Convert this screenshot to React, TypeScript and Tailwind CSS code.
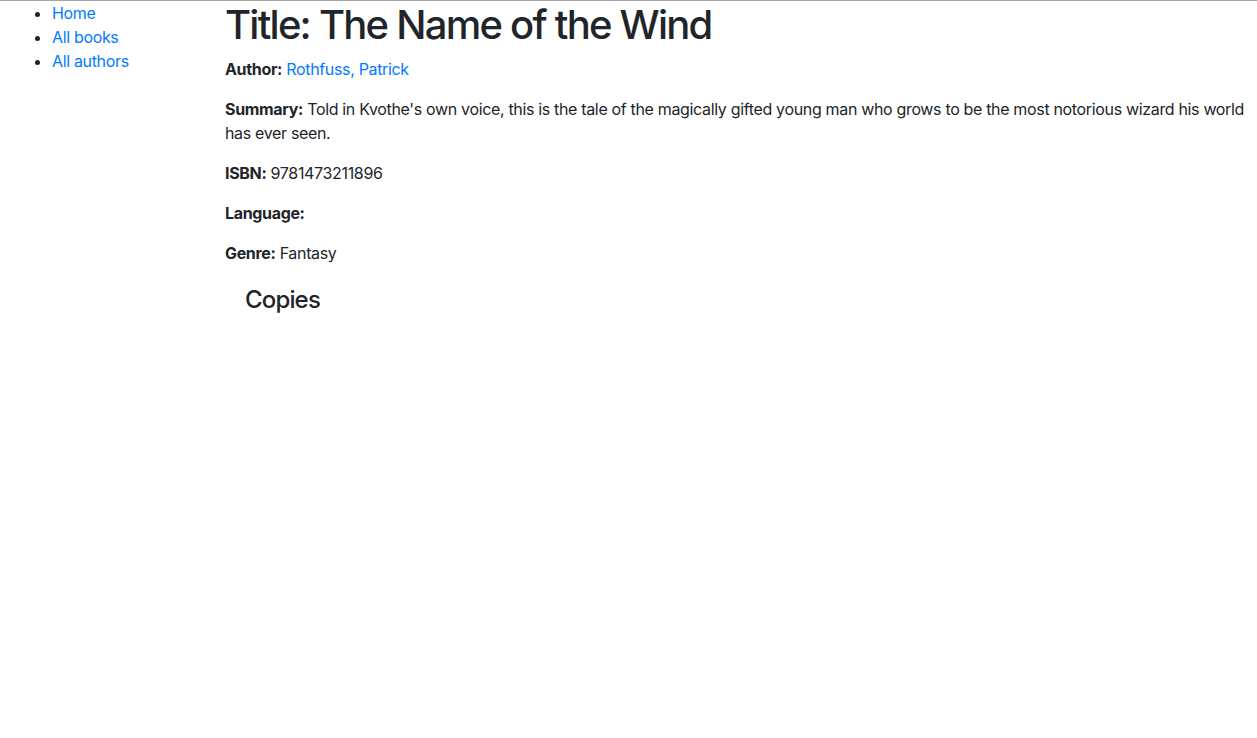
import React from "react";

const BookDetail = () => {
  return (
    <div
      className="min-h-screen bg-white border-t border-[#a3a3a3] text-[#212529] text-[16px] leading-6 tracking-[-0.021em]"
      style={{ fontFamily: "Inter, 'Noto Sans', sans-serif" }}
    >
      <div className="flex">
        <div className="w-[210px] shrink-0 pl-3">
          <ul className="list-disc pl-10">
            <li>
              <a href="#" className="text-[#007bff]">Home</a>
            </li>
            <li>
              <a href="#" className="text-[#007bff]">All books</a>
            </li>
            <li>
              <a href="#" className="text-[#007bff]">All authors</a>
            </li>
          </ul>
        </div>

        <div className="flex-1 pl-[15px] pr-[6px]">
          <h1 className="text-[40px] leading-[48px] font-medium mb-2 tracking-[-0.044em]">
            Title: The Name of the Wind
          </h1>

          <p className="mb-4">
            <strong className="font-bold">Author:</strong>{" "}
            <a href="#" className="text-[#007bff]">Rothfuss, Patrick</a>
          </p>
          <p className="mb-4">
            <strong className="font-bold">Summary:</strong> Told in Kvothe's own voice, this is the tale of the magically
            gifted young man who grows to be the most notorious wizard his world has ever seen.
          </p>
          <p className="mb-4">
            <strong className="font-bold">ISBN:</strong> 9781473211896
          </p>
          <p className="mb-4">
            <strong className="font-bold">Language:</strong>
          </p>
          <p className="mb-4">
            <strong className="font-bold">Genre:</strong> Fantasy
          </p>

          <div className="ml-5 mt-5">
            <h4 className="text-[24px] leading-[29px] font-medium tracking-[-0.035em]">Copies</h4>
          </div>
        </div>
      </div>
    </div>
  );
};

export default function App() {
  return <BookDetail />;
}
